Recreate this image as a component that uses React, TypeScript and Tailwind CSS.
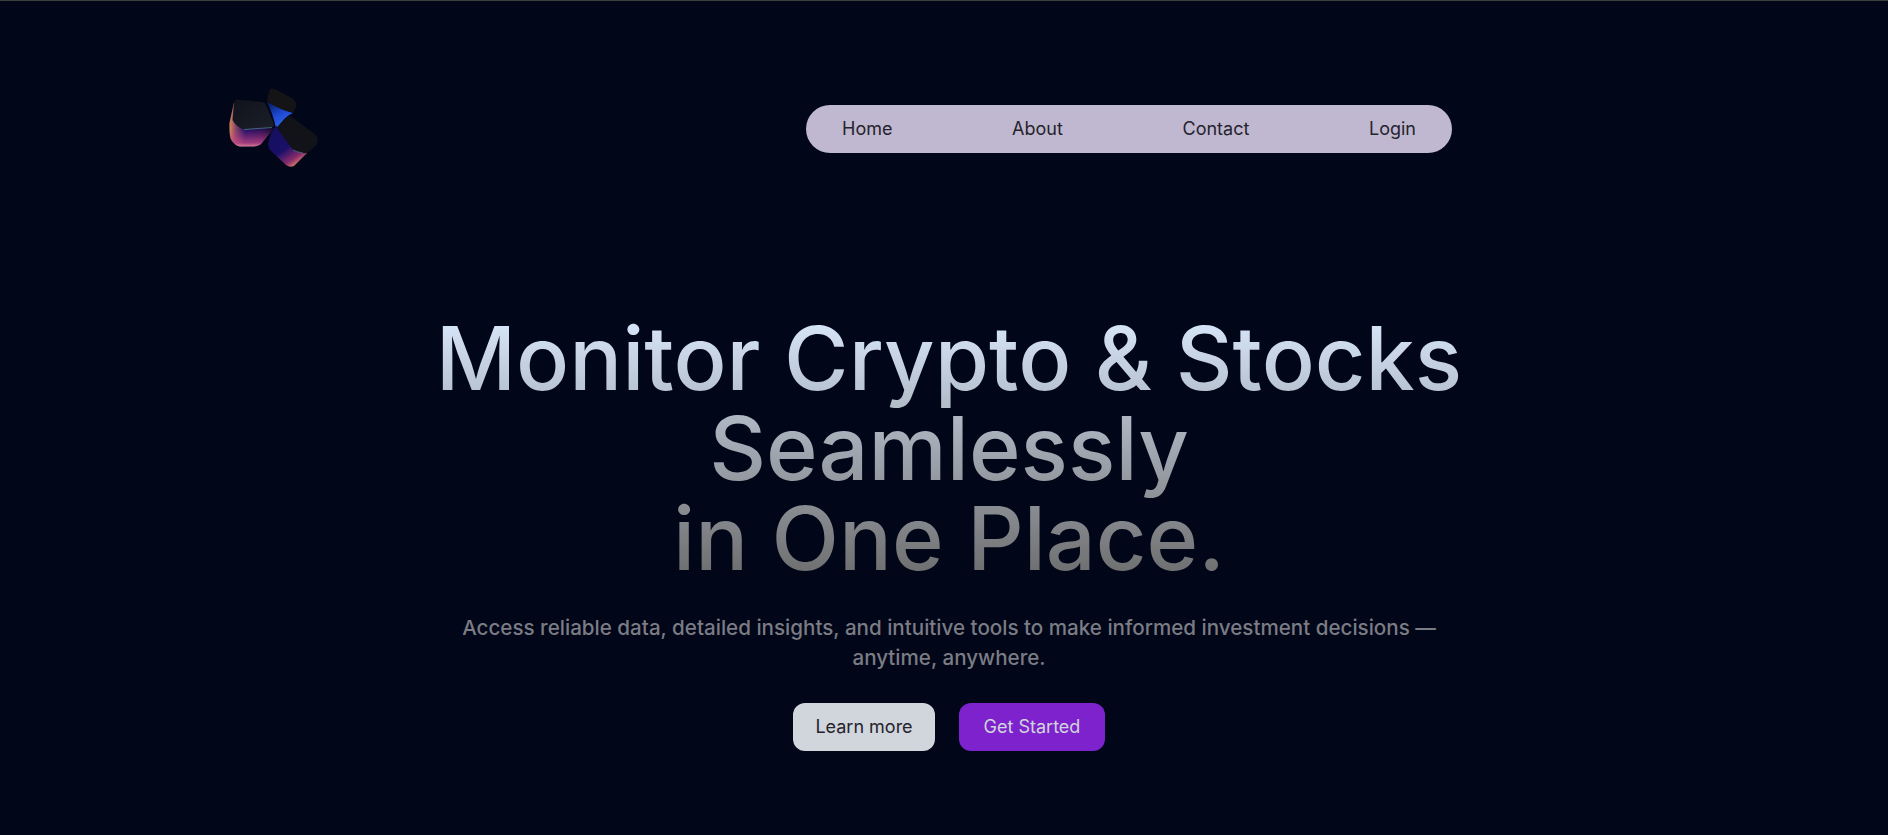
function Logo() {
  return (
    <svg width="130" height="110" viewBox="0 0 130 110" className="shrink-0">
      <defs>
        <linearGradient id="leftSide" x1="0" y1="0" x2="1" y2="0">
          <stop offset="0" stopColor="#d88a58" />
          <stop offset="0.14" stopColor="#8a4468" />
          <stop offset="0.35" stopColor="#241268" />
          <stop offset="0.7" stopColor="#2e1058" />
          <stop offset="1" stopColor="#160c2c" />
        </linearGradient>
        <linearGradient id="leftGlow" x1="0" y1="0" x2="0" y2="1">
          <stop offset="0.62" stopColor="#c83a88" stopOpacity="0" />
          <stop offset="0.92" stopColor="#c84a88" stopOpacity="0.75" />
          <stop offset="1" stopColor="#e88a9a" stopOpacity="0.9" />
        </linearGradient>
        <linearGradient id="rightSide" x1="0.1" y1="0" x2="0.75" y2="1">
          <stop offset="0" stopColor="#14105c" />
          <stop offset="0.55" stopColor="#1a0f68" />
          <stop offset="0.82" stopColor="#8a2c6c" />
          <stop offset="1" stopColor="#e89468" />
        </linearGradient>
        <linearGradient id="blueFace" x1="0.1" y1="0" x2="0.6" y2="1">
          <stop offset="0" stopColor="#081a5c" />
          <stop offset="0.5" stopColor="#1c48d0" />
          <stop offset="1" stopColor="#3468e8" />
        </linearGradient>
        <linearGradient id="topFace" x1="0" y1="0" x2="1" y2="1">
          <stop offset="0" stopColor="#10121c" />
          <stop offset="1" stopColor="#1c1e29" />
        </linearGradient>
      </defs>
      <path d="M57 32 L83 43 Q73 47 69 58 L66 58 Q63 44 57 32 Z" fill="url(#blueFace)" />
      <path d="M60 19 Q62 18 66 19.5 L82 28 Q87 32 86.5 36 L83 43 Q70 40 57 31.5 Q58 24 60 19 Z" fill="#141316" />
      <path d="M24 32 L19.5 53 Q19 68 22 71 Q26 76 30 76.5 L44 76.5 Q50 75.5 52 73 L64 58 L30 58 Z" fill="url(#leftSide)" />
      <path d="M24 32 L19.5 53 Q19 68 22 71 Q26 76 30 76.5 L44 76.5 Q50 75.5 52 73 L64 58 L30 58 Z" fill="url(#leftGlow)" />
      <path d="M26 29.5 Q24.5 30 24 33 L22.5 50 Q26 57 34 59.5 L62 57.5 Q65 56 63.5 53 L56 35 Q55 32 51 32 Z" fill="url(#topFace)" />
      <path d="M34 59.5 L62 57.5" stroke="#5aa0a8" strokeWidth="0.6" fill="none" />
      <path d="M66 56 Q62 60 60 66 L58 74 Q58 78 61 81 L76 95 Q80 98 84 96 L97 83 L80 60 Z" fill="url(#rightSide)" />
      <path d="M78 46 Q80 46 83 48 L105 64 Q109 68 107 74 L100 81 Q97 84 93 83 Q87 82 83 80 L67 58 Q68 55 78 46 Z" fill="#121319" />
      <path d="M83 80 Q87 82 93 83" stroke="#4a8a98" strokeWidth="0.6" fill="none" />
    </svg>
  )
}

export default function App() {
  return (
    <div className="min-h-[835px] border-t border-[#3a3f3f] bg-[#010619] font-['Inter',sans-serif]">
      <div className="flex items-start pl-[210px] pt-[69px]">
        <Logo />
        <nav className="ml-[466px] mt-[35px] flex h-12 w-[646px] items-center justify-between rounded-3xl bg-[#c0b8d0] px-9 text-lg text-[#25232c]">
          <a>Home</a>
          <a>About</a>
          <a>Contact</a>
          <a>Login</a>
        </nav>
      </div>
      <div className="ml-[10px] mt-[133px] flex flex-col items-center">
        <h1 className="bg-gradient-to-b from-[#dbeafe] to-[#6b6b6b] bg-clip-text text-center text-[88px] font-medium leading-[90px] text-transparent">
          Monitor Crypto &amp; Stocks
          <br />
          Seamlessly
          <br />
          in One Place.
        </h1>
        <p className="mt-[30px] w-[1000px] text-center text-[20.6px] font-medium leading-[30px] text-[#7b7c84]">
          Access reliable data, detailed insights, and intuitive tools to make informed investment decisions —
          <br />
          anytime, anywhere.
        </p>
        <div className="mt-[30px] flex gap-6">
          <button className="h-12 w-[142px] rounded-xl bg-gray-300 text-lg text-[#25232c]">Learn more</button>
          <button className="h-12 w-[146px] rounded-xl bg-[#7e22ce] text-lg text-gray-300">Get Started</button>
        </div>
      </div>
    </div>
  )
}
